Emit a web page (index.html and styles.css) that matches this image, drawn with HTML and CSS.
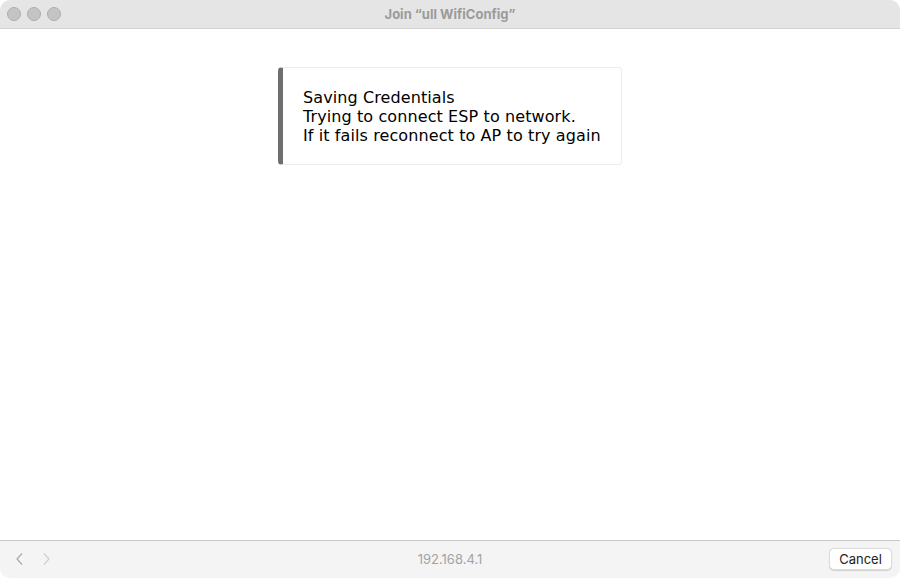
FILE: index.html
```html
<!DOCTYPE html>
<html>
<head>
<meta charset="utf-8">
<link rel="stylesheet" href="styles.css">
</head>
<body>
<div class="window">
  <div class="titlebar">
    <div class="lights">
      <span class="light"></span>
      <span class="light"></span>
      <span class="light"></span>
    </div>
    <div class="title">Join “ull WifiConfig”</div>
  </div>
  <div class="content">
    <div class="msg">
      Saving Credentials<br>
      Trying to connect ESP to network.<br>
      If it fails reconnect to AP to try again
    </div>
  </div>
  <div class="bottombar">
    <div class="nav">
      <svg class="chev back" width="10" height="14" viewBox="0 0 10 14"><path d="M7 1.5 L2 7 L7 12.5" fill="none" stroke="#a8a8a8" stroke-width="1.2"/></svg>
      <svg class="chev fwd" width="10" height="14" viewBox="0 0 10 14"><path d="M3 1.5 L8 7 L3 12.5" fill="none" stroke="#cfcfcf" stroke-width="1.2"/></svg>
    </div>
    <div class="url">192.168.4.1</div>
    <div class="actions"><button class="cancel">Cancel</button></div>
  </div>
</div>
</body>
</html>
```
FILE: styles.css
```css
html, body {
  margin: 0;
  padding: 0;
  width: 900px;
  height: 578px;
  background: #ffffff;
  overflow: hidden;
}
.window {
  width: 900px;
  height: 578px;
  display: flex;
  flex-direction: column;
  border-radius: 10px;
  overflow: hidden;
  background: #ffffff;
}
.titlebar {
  height: 28px;
  flex: 0 0 28px;
  background: #e5e5e5;
  border-bottom: 1px solid #d2d2d2;
  display: grid;
  grid-template-columns: 1fr auto 1fr;
  align-items: center;
}
.lights {
  display: flex;
  gap: 6px;
  padding-left: 7px;
}
.light {
  width: 12px;
  height: 12px;
  border-radius: 50%;
  background: #c4c4c4;
  border: 1px solid #adadad;
}
.title {
  font-family: "Inter", "Liberation Sans", sans-serif;
  font-weight: 700;
  font-size: 13px;
  color: #9b9b9b;
  grid-column: 2;
}
.content {
  flex: 1;
  display: flex;
  justify-content: center;
  align-items: flex-start;
  padding-top: 38px;
}
.msg {
  width: 298px;
  padding: 20px 20px 19px 20px;
  border: 1px solid #ececec;
  border-left: 5px solid #6e6e6e;
  border-radius: 4px;
  font-family: "DejaVu Sans", Verdana, sans-serif;
  font-size: 16px;
  line-height: 19px;
  letter-spacing: 0.1px;
  color: #000;
}
.bottombar {
  height: 38px;
  flex: 0 0 38px;
  box-sizing: border-box;
  padding-bottom: 2px;
  background: #f4f4f4;
  border-top: 1px solid #c9c9c9;
  display: grid;
  grid-template-columns: 1fr auto 1fr;
  align-items: center;
}
.nav {
  display: flex;
  gap: 16px;
  padding-left: 15px;
  align-items: center;
}
.chev { display: block; }
.url {
  font-family: "Inter", "Liberation Sans", sans-serif;
  font-size: 13px;
  color: #a3a3a3;
}
.actions {
  display: flex;
  justify-content: flex-end;
  padding-right: 8px;
}
.cancel {
  font-family: "Inter", "Liberation Sans", sans-serif;
  font-size: 13px;
  color: #222;
  background: #fff;
  border: 1px solid #dcdcdc;
  border-radius: 5px;
  box-shadow: 0 0.5px 1px rgba(0,0,0,0.15);
  width: 63px;
  height: 22px;
  padding: 0;
}
```
